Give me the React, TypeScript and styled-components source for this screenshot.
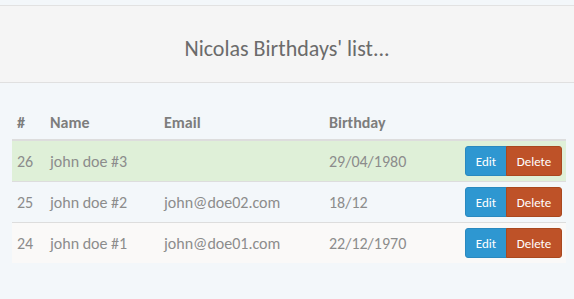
import React from "react";
import styled, { createGlobalStyle } from "styled-components";

const GlobalStyle = createGlobalStyle`
	*, *::before, *::after {
		box-sizing: border-box;
	}
	body {
		margin: 0;
		background: #f3f7fa;
		font-family: Carlito, Calibri, Lato, "Open Sans", sans-serif;
		color: #888;
	}
`

const Page = styled.div`
	padding-top: 5px;
`

const Header = styled.header`
	background: #f5f5f5;
	border-top: 1px solid #e2e2e2;
	border-bottom: 1px solid #e0e0e0;
	height: 78px;
	display: flex;
	align-items: center;
	justify-content: center;
`

const Title = styled.h1`
	margin: 0;
	font-size: 22px;
	font-weight: 400;
	color: #6b6b6b;
	padding-top: 8px;
`

const Content = styled.div`
	padding: 20px 8px 0 12px;
`

const Table = styled.table`
	width: 554px;
	border-collapse: collapse;
	table-layout: fixed;
	font-size: 16px;
`

const Th = styled.th<{ $w?: number }>`
	width: ${p => (p.$w ? `${p.$w}px` : "auto")};
	text-align: left;
	font-weight: 700;
	color: #7d7d7d;
	padding: 10px 5px 6px;
	line-height: 20px;
	border-bottom: 2px solid #dddddd;
`

const Row = styled.tr<{ $bg: string }>`
	background: ${p => p.$bg};
	border-bottom: 1px solid #dddddd;
	&:last-child {
		border-bottom: none;
	}
`

const Td = styled.td`
	padding: 6px 5px 4px;
	height: 40px;
	line-height: 20px;
	color: #8c8c8c;
	white-space: nowrap;
`

const Actions = styled.td`
	padding: 5px 4px 5px 5px;
	height: 40px;
	text-align: right;
	line-height: 0;
`

const ButtonGroup = styled.div`
	display: inline-flex;
`

const Button = styled.button<{ $kind: "edit" | "delete" }>`
	height: 30px;
	width: ${p => (p.$kind === "edit" ? "42px" : "56px")};
	padding: 0;
	font-family: inherit;
	font-size: 13px;
	color: #fff;
	cursor: pointer;
	background: ${p => (p.$kind === "edit" ? "#2e97d1" : "#be5228")};
	border: 1px solid ${p => (p.$kind === "edit" ? "#2a89bf" : "#a9481f")};
	border-radius: ${p => (p.$kind === "edit" ? "3px 0 0 3px" : "0 3px 3px 0")};
	margin-left: ${p => (p.$kind === "delete" ? "-1px" : "0")};
`

interface Person {
	id: number;
	name: string;
	email: string;
	birthday: string;
}

const people: Person[] = [
	{ id: 26, name: "john doe #3", email: "", birthday: "29/04/1980" },
	{ id: 25, name: "john doe #2", email: "john@doe02.com", birthday: "18/12" },
	{ id: 24, name: "john doe #1", email: "john@doe01.com", birthday: "22/12/1970" },
];

const rowColors = ["#dff0d8", "transparent", "#faf9f8"];

const App: React.FC = () => {
	return (
		<Page>
			<GlobalStyle />
			<Header>
				<Title>Nicolas Birthdays' list...</Title>
			</Header>
			<Content>
				<Table>
					<thead>
						<tr>
							<Th $w={33}>#</Th>
							<Th $w={114}>Name</Th>
							<Th $w={165}>Email</Th>
							<Th $w={120}>Birthday</Th>
							<Th></Th>
						</tr>
					</thead>
					<tbody>
						{people.map((p, i) => (
							<Row key={p.id} $bg={rowColors[i]}>
								<Td>{p.id}</Td>
								<Td>{p.name}</Td>
								<Td>{p.email}</Td>
								<Td>{p.birthday}</Td>
								<Actions>
									<ButtonGroup>
										<Button $kind="edit">Edit</Button>
										<Button $kind="delete">Delete</Button>
									</ButtonGroup>
								</Actions>
							</Row>
						))}
					</tbody>
				</Table>
			</Content>
		</Page>
	)
}

export default App;
